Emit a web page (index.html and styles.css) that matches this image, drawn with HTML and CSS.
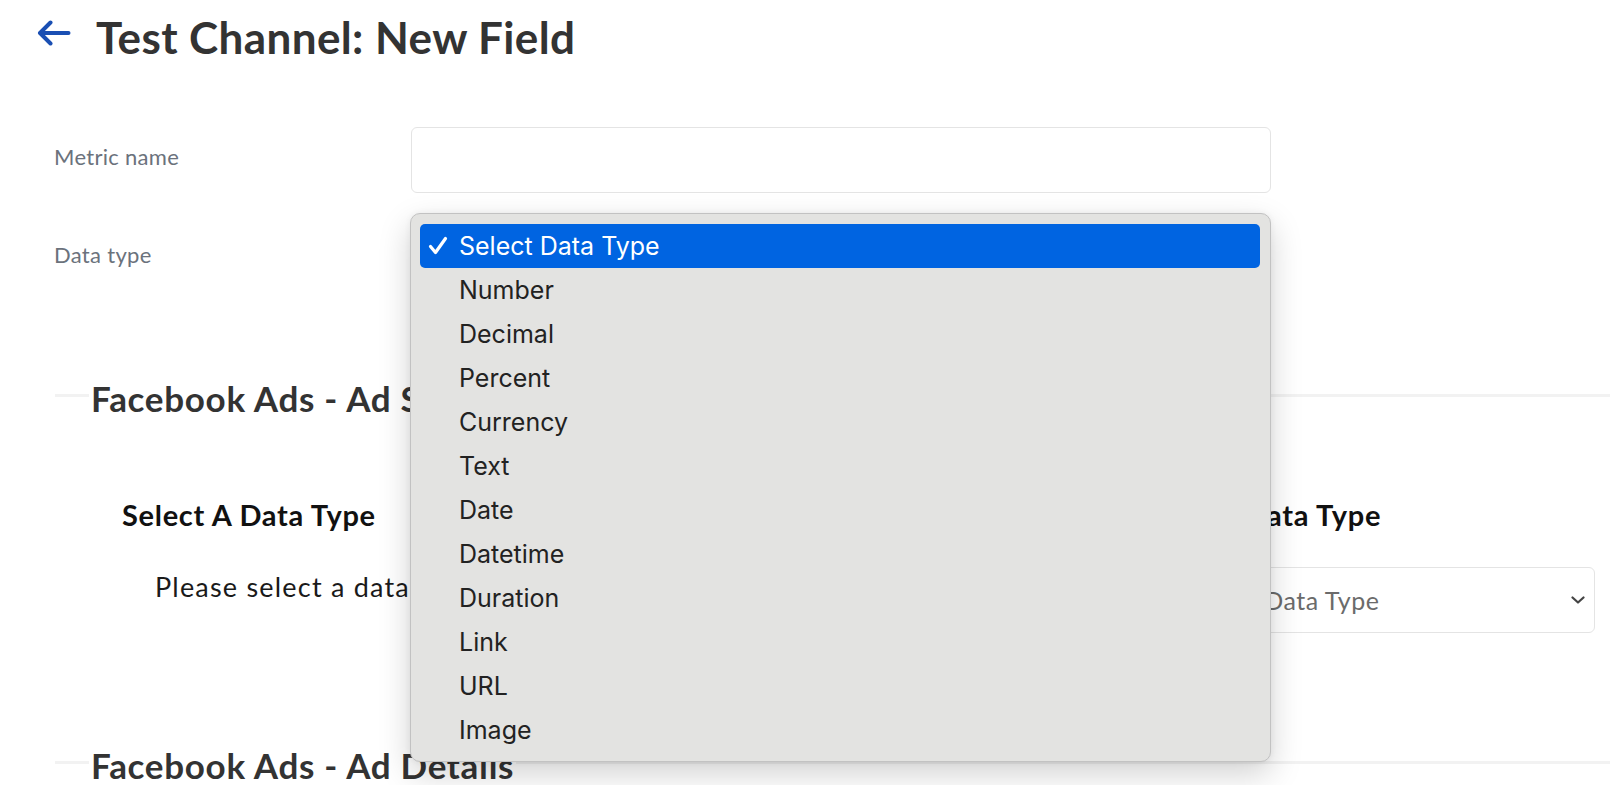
FILE: index.html
```html
<!DOCTYPE html>
<html lang="en">
<head>
    <meta charset="UTF-8">
    <meta name="viewport" content="width=device-width, initial-scale=1.0">
    <title>Test Channel: New Field</title>
    <link rel="stylesheet" href="styles.css">
</head>
<body>
    <header class="page-header">
        <a class="back-link" href="#" aria-label="Back">
            <svg width="34" height="26" viewBox="0 0 34 26" fill="none" stroke="#1a4fb3" stroke-width="4" stroke-linecap="round" stroke-linejoin="round">
                <path d="M31.5 13H3.5"/>
                <path d="M13.5 2.5L3 13l10.5 10.5"/>
            </svg>
        </a>
        <h1>Test Channel: New Field</h1>
    </header>

    <form class="field-form">
        <div class="form-row">
            <label for="metricName">Metric name</label>
            <input id="metricName" class="text-input" type="text">
        </div>
        <div class="form-row">
            <label>Data type</label>
            <div class="select-wrap">
                <div class="select-box"></div>
                <ul class="select-menu">
                    <li class="menu-item selected">
                        <span class="check">
                            <svg width="20" height="19" viewBox="0 0 20 19" fill="none" stroke="#fff" stroke-width="3.2" stroke-linecap="round" stroke-linejoin="round">
                                <path d="M2.5 10.5l5 6L17.5 2.5"/>
                            </svg>
                        </span>Select Data Type
                    </li>
                    <li class="menu-item"><span class="check"></span>Number</li>
                    <li class="menu-item"><span class="check"></span>Decimal</li>
                    <li class="menu-item"><span class="check"></span>Percent</li>
                    <li class="menu-item"><span class="check"></span>Currency</li>
                    <li class="menu-item"><span class="check"></span>Text</li>
                    <li class="menu-item"><span class="check"></span>Date</li>
                    <li class="menu-item"><span class="check"></span>Datetime</li>
                    <li class="menu-item"><span class="check"></span>Duration</li>
                    <li class="menu-item"><span class="check"></span>Link</li>
                    <li class="menu-item"><span class="check"></span>URL</li>
                    <li class="menu-item"><span class="check"></span>Image</li>
                </ul>
            </div>
        </div>
    </form>

    <fieldset class="section">
        <legend>Facebook Ads - Ad Set</legend>
        <div class="mapping">
            <div class="mapping-col">
                <h3>Select A Data Type</h3>
                <p class="hint">Please select a data type above</p>
            </div>
            <div class="mapping-col right">
                <h3>Target Data Type</h3>
                <div class="mapping-select">
                    <span class="placeholder">Select A Data Type</span>
                    <svg width="14" height="8" viewBox="0 0 14 8" fill="none" stroke="#444" stroke-width="2.2" stroke-linecap="round" stroke-linejoin="round">
                        <path d="M1.5 1.5L7 6.5l5.5-5"/>
                    </svg>
                </div>
            </div>
        </div>
    </fieldset>

    <fieldset class="section second">
        <legend>Facebook Ads - Ad Details</legend>
    </fieldset>
</body>
</html>
```

FILE: styles.css
```css
html {
    overflow: hidden;
}
body {
    font-family: Lato, "Noto Sans", sans-serif;
    background-color: #fff;
    color: #333;
    margin: 0;
    padding: 0;
}
.page-header {
    display: flex;
    align-items: flex-start;
    gap: 25px;
    padding: 11px 0 0 37px;
}
.back-link {
    display: block;
    margin-top: 9px;
    line-height: 0;
}
.page-header h1 {
    margin: 0;
    font-size: 44px;
    line-height: 1.2;
    font-weight: 700;
    letter-spacing: 0.4px;
    color: #333;
}
.field-form {
    margin-top: 63px;
    padding-left: 54px;
    display: flex;
    flex-direction: column;
    gap: 32px;
}
.form-row {
    display: grid;
    grid-template-columns: 357px 860px;
    align-items: center;
}
.form-row label {
    font-size: 22px;
    letter-spacing: 0.3px;
    color: #6b727c;
    margin-bottom: 6px;
}
.text-input, .select-box {
    height: 66px;
    box-sizing: border-box;
    border: 1px solid #e4e4e4;
    border-radius: 6px;
    background: #fff;
    margin: 0;
    font-size: 20px;
}
.select-wrap {
    position: relative;
}
.select-menu {
    position: absolute;
    top: -12px;
    left: -1px;
    width: 861px;
    box-sizing: border-box;
    margin: 0;
    padding: 10px 10px 9px 9px;
    list-style: none;
    background: #e3e3e1;
    border: 1px solid #c2c2c2;
    border-radius: 10px;
    box-shadow: 0 12px 32px rgba(0, 0, 0, 0.18), 0 0 6px rgba(0, 0, 0, 0.06);
    font-family: Inter, "Noto Sans", sans-serif;
    font-size: 25px;
    color: #222;
    z-index: 10;
}
.menu-item {
    height: 44px;
    display: flex;
    align-items: center;
    padding-left: 8px;
    border-radius: 5px;
}
.menu-item.selected {
    background: #0064e1;
    color: #fff;
}
.check {
    width: 31px;
    display: flex;
    align-items: center;
}
.section {
    margin: 83px 0 0 55px;
    padding: 0 15px 0 34px;
    border: none;
    border-top: 3px solid #f2f2f2;
}
.section legend {
    font-size: 35px;
    line-height: 40px;
    font-weight: 700;
    letter-spacing: 0.7px;
    color: #333;
    padding: 4px 2px 0;
    background: #fff;
}
.section.second {
    margin-top: 108px;
}
.mapping {
    display: grid;
    grid-template-columns: 1fr 500px;
    margin-top: 80px;
}
.mapping-col {
    padding-left: 33px;
}
.mapping-col.right {
    padding-left: 0;
}
.mapping h3 {
    margin: 0;
    font-size: 29px;
    line-height: 1.2;
    font-weight: 700;
    letter-spacing: 0.7px;
    color: #111;
}
.mapping-col.right h3 {
    padding-left: 57px;
}
.hint {
    margin: 38px 0 0 33px;
    font-size: 27px;
    line-height: 1.2;
    letter-spacing: 1.2px;
    color: #1a1a1a;
}
.mapping-select {
    margin-top: 34px;
    height: 66px;
    box-sizing: border-box;
    border: 1px solid #e4e4e4;
    border-radius: 6px;
    display: flex;
    align-items: center;
    justify-content: space-between;
    padding: 0 9px 0 69px;
    font-size: 25px;
    letter-spacing: 0.5px;
    color: #6b6b6b;
}
```
